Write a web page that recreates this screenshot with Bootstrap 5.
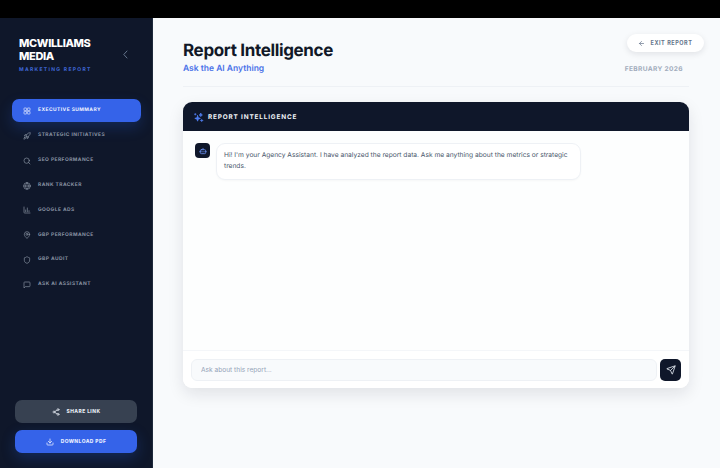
<!DOCTYPE html>
<html lang="en">
  <head>
    <meta charset="UTF-8" />
    <meta name="viewport" content="width=device-width, initial-scale=1.0" />
    <title>Report Intelligence</title>

    <!-- Bootstrap CSS -->
    <link
      rel="stylesheet"
      href="https://cdn.jsdelivr.net/npm/bootstrap@5.3.0/dist/css/bootstrap.min.css"
    />

    <style>
      html, body { height: 468px; overflow: hidden; }
      body { font-family: Inter, "Liberation Sans", sans-serif; background: #000; padding-top: 18px; text-rendering: geometricPrecision; }
      .app-shell { height: 450px; background: #f8fafc; }

      /* sidebar */
      .side-panel { width: 153px; background: #0f172a; border-right: 1px solid #1e293b; flex-shrink: 0; }
      .brand-box { padding: 19px 19px 0 19px; height: 81px; }
      .brand-name { font-size: 11px; line-height: 13px; font-weight: 800; color: #fff; letter-spacing: -0.35px; width: 76px; margin: 0; }
      .brand-sub { font-size: 5px; line-height: 6px; font-weight: 700; color: #3f68d8; letter-spacing: 1.3px; margin-top: 4px; }
      .collapse-arrow { color: #64748b; margin-top: 13px; margin-right: 4px; }
      .side-menu { padding: 0 11px 0 12px; gap: 1.86px; }
      .side-item { height: 23px; padding: 1px 0 0 11px; gap: 7px; font-size: 4.9px; font-weight: 700; letter-spacing: 0.45px; color: #8b95a5; border-radius: 7px; text-decoration: none; text-transform: uppercase; }
      .side-item svg { color: #8b95a5; flex-shrink: 0; }
      .side-item.is-active { background: #3563e9; color: #f1f5ff; box-shadow: 0 6px 14px rgba(37, 99, 235, .22); }
      .side-item.is-active svg { color: #dbe4ff; }
      .side-actions { padding: 0 15px 15px 15px; gap: 7px; }
      .side-btn { height: 23px; border-radius: 7px; font-size: 4.9px; font-weight: 800; letter-spacing: 0.45px; gap: 7px; border: 0; color: #e2e8f0; padding: 0; }
      .btn-share { background: #374151; }
      .btn-pdf { background: #3563e9; box-shadow: 0 5px 14px rgba(37, 99, 235, .25); color: #e6ecff; }

      /* main */
      .main-area { padding: 16px 16px 0 30px; min-width: 0; }
      .page-head { width: 506px; height: 53px; border-bottom: 1px solid #eef1f5; position: relative; }
      .page-title { font-size: 17px; line-height: 22px; font-weight: 700; letter-spacing: -0.35px; color: #111827; margin: 6px 0 0 0; }
      .page-sub { font-size: 8.5px; line-height: 12px; font-weight: 600; color: #4a72e8; margin-top: 1px; }
      .exit-pill { position: absolute; top: 0; left: 444px; width: 77px; height: 18px; background: #fff; border: 0; border-radius: 9px; box-shadow: 0 2px 6px rgba(15, 23, 42, .1); font-size: 5.5px; font-weight: 700; letter-spacing: 0.55px; color: #64748b; gap: 5px; padding: 0; }
      .report-date { font-size: 6.6px; line-height: 10px; font-weight: 700; letter-spacing: 0.35px; color: #a3adbd; margin-top: 30px; padding-right: 6px; }

      /* chat */
      .chat-box { width: 506px; height: 286px; margin-top: 15px; background: #fff; border: 0; border-radius: 9px; box-shadow: 0 6px 16px rgba(15, 23, 42, .1); overflow: hidden; }
      .chat-head { height: 29px; background: #0f172a; padding: 2px 0 0 10px; gap: 4px; font-size: 6.4px; font-weight: 700; letter-spacing: 0.85px; color: #f1f5f9; }
      .chat-body { height: 219px; padding: 12px; background: #fdfefe; gap: 6px; }
      .bot-avatar { width: 15px; height: 15px; background: #0f172a; border-radius: 4px; flex-shrink: 0; }
      .bot-bubble { width: 365px; height: 37px; background: #fff; border: 1px solid #eef1f5; border-radius: 9px; padding: 6px 4px 6px 7px; font-size: 6.65px; line-height: 11px; color: #475569; box-shadow: 0 1px 2px rgba(15, 23, 42, .03); }
      .chat-foot { height: 38px; padding: 8px; gap: 3px; background: #fff; border-top: 1px solid #f4f6f9; }
      .ask-input.form-control { height: 22px; width: 466px; min-height: 0; background: #f8fafc; border: 1px solid #eef1f5; border-radius: 6px; font-size: 6.6px; padding: 0 9px; color: #475569; box-shadow: none; }
      .ask-input.form-control::placeholder { color: #94a3b8; }
      .send-btn { width: 21px; height: 22px; background: #0f172a; border: 0; border-radius: 5px; padding: 0; flex-shrink: 0; }
    </style>
  </head>
  <body>
    <div class="app-shell d-flex">
      <!-- sidebar -->
      <div class="side-panel d-flex flex-column">
        <div class="brand-box d-flex justify-content-between align-items-start">
          <div>
            <h1 class="brand-name">MCWILLIAMS MEDIA</h1>
            <div class="brand-sub">MARKETING REPORT</div>
          </div>
          <svg class="collapse-arrow" width="7" height="9" viewBox="0 0 7 9" fill="none" stroke="currentColor" stroke-width="1" stroke-linecap="round" stroke-linejoin="round"><path d="M5 1 1.8 4.5 5 8" /></svg>
        </div>

        <div class="side-menu d-flex flex-column">
          <a class="side-item is-active d-flex align-items-center" href="#">
            <svg width="8" height="8" viewBox="0 0 24 24" fill="none" stroke="currentColor" stroke-width="2.2"><rect x="3" y="3" width="8" height="8" rx="1.5" /><rect x="13" y="3" width="8" height="8" rx="1.5" /><rect x="3" y="13" width="8" height="8" rx="1.5" /><rect x="13" y="13" width="8" height="8" rx="1.5" /></svg>
            Executive Summary
          </a>
          <a class="side-item d-flex align-items-center" href="#">
            <svg width="8" height="8" viewBox="0 0 24 24" fill="none" stroke="currentColor" stroke-width="2" stroke-linecap="round" stroke-linejoin="round"><path d="M4.5 16.5c-1.5 1.3-2 5-2 5s3.700-.5 5-2c.7-.8.7-2.100-.1-2.900a2.200 2.200 0 0 0-2.900-.1z" /><path d="m12 15-3-3a22 22 0 0 1 2-3.900A12.900 12.900 0 0 1 22 2c0 2.700-.8 7.500-6 11a22.400 22.400 0 0 1-4 2z" /><path d="M9 12H4s.6-3 2-4c1.600-1.100 5 0 5 0M12 15v5s3-.6 4-2c1.100-1.600 0-5 0-5" /></svg>
            Strategic Initiatives
          </a>
          <a class="side-item d-flex align-items-center" href="#">
            <svg width="8" height="8" viewBox="0 0 24 24" fill="none" stroke="currentColor" stroke-width="2" stroke-linecap="round"><circle cx="11" cy="11" r="8" /><path d="m21 21-4.300-4.300" /></svg>
            SEO Performance
          </a>
          <a class="side-item d-flex align-items-center" href="#">
            <svg width="8" height="8" viewBox="0 0 24 24" fill="none" stroke="currentColor" stroke-width="2" stroke-linecap="round"><circle cx="12" cy="12" r="10" /><path d="M2 12h20M12 2a15 15 0 0 1 0 20 15 15 0 0 1 0-20z" /></svg>
            Rank Tracker
          </a>
          <a class="side-item d-flex align-items-center" href="#">
            <svg width="8" height="8" viewBox="0 0 24 24" fill="none" stroke="currentColor" stroke-width="2" stroke-linecap="round" stroke-linejoin="round"><path d="M3 3v16a2 2 0 0 0 2 2h16M8 17v-5M13 17V6M18 17v-3" /></svg>
            Google Ads
          </a>
          <a class="side-item d-flex align-items-center" href="#">
            <svg width="8" height="8" viewBox="0 0 24 24" fill="none" stroke="currentColor" stroke-width="2" stroke-linecap="round" stroke-linejoin="round"><path d="M20 10c0 5-5.500 10.200-7.400 11.800a1 1 0 0 1-1.200 0C9.500 20.200 4 15 4 10a8 8 0 0 1 16 0z" /><circle cx="12" cy="10" r="3" /></svg>
            GBP Performance
          </a>
          <a class="side-item d-flex align-items-center" href="#">
            <svg width="8" height="8" viewBox="0 0 24 24" fill="none" stroke="currentColor" stroke-width="2" stroke-linecap="round" stroke-linejoin="round"><path d="M20 13c0 5-3.500 7.500-7.700 8.900a1 1 0 0 1-.6 0C7.500 20.500 4 18 4 13V6a1 1 0 0 1 1-1c2 0 4.500-1.200 6.200-2.700a1.200 1.200 0 0 1 1.600 0C14.500 3.800 17 5 19 5a1 1 0 0 1 1 1z" /></svg>
            GBP Audit
          </a>
          <a class="side-item d-flex align-items-center" href="#">
            <svg width="8" height="8" viewBox="0 0 24 24" fill="none" stroke="currentColor" stroke-width="2" stroke-linecap="round" stroke-linejoin="round"><path d="M21 15a2 2 0 0 1-2 2H7l-4 4V5a2 2 0 0 1 2-2h14a2 2 0 0 1 2 2z" /></svg>
            Ask AI Assistant
          </a>
        </div>

        <div class="side-actions d-flex flex-column mt-auto">
          <button class="side-btn btn-share d-flex align-items-center justify-content-center" type="button">
            <svg width="8" height="8" viewBox="0 0 24 24" fill="none" stroke="currentColor" stroke-width="2.200" stroke-linecap="round"><circle cx="18" cy="5" r="3" /><circle cx="6" cy="12" r="3" /><circle cx="18" cy="19" r="3" /><path d="m8.600 13.500 6.800 4M15.400 6.500l-6.800 4" /></svg>
            SHARE LINK
          </button>
          <button class="side-btn btn-pdf d-flex align-items-center justify-content-center" type="button">
            <svg width="8" height="8" viewBox="0 0 24 24" fill="none" stroke="currentColor" stroke-width="2.400" stroke-linecap="round" stroke-linejoin="round"><path d="M21 15v4a2 2 0 0 1-2 2H5a2 2 0 0 1-2-2v-4M7 10l5 5 5-5M12 15V3" /></svg>
            DOWNLOAD PDF
          </button>
        </div>
      </div>

      <!-- main -->
      <div class="main-area flex-grow-1">
        <div class="page-head d-flex justify-content-between">
          <div>
            <h2 class="page-title">Report Intelligence</h2>
            <div class="page-sub">Ask the AI Anything</div>
          </div>
          <div class="report-date">FEBRUARY 2026</div>
          <button class="exit-pill d-flex align-items-center justify-content-center" type="button">
            <svg width="7" height="7" viewBox="0 0 24 24" fill="none" stroke="currentColor" stroke-width="2.400" stroke-linecap="round" stroke-linejoin="round"><path d="m12 19-7-7 7-7M19 12H5" /></svg>
            EXIT REPORT
          </button>
        </div>

        <div class="chat-box card">
          <div class="chat-head d-flex align-items-center">
            <svg width="11" height="11" viewBox="0 0 24 24" fill="#4f7df0" stroke="#4f7df0" stroke-width="1.800" stroke-linecap="round" stroke-linejoin="round"><path d="M10 8l1.500 4.500L16 14l-4.500 1.500L10 20l-1.500-4.500L4 14l4.500-1.500z" /><path d="M17 3l1 2.500L20.500 6.500 18 7.500 17 10l-1-2.500L13.500 6.500 16 5.500zM5 3.500v3M3.500 5h3M19 16v5M16.500 18.500h5" /></svg>
            REPORT INTELLIGENCE
          </div>
          <div class="chat-body d-flex align-items-start">
            <div class="bot-avatar d-flex align-items-center justify-content-center">
              <svg width="8" height="8" viewBox="0 0 24 24" fill="none" stroke="#6d94f5" stroke-width="2.400" stroke-linecap="round" stroke-linejoin="round"><path d="M12 8V4" /><rect x="4" y="8" width="16" height="12" rx="3" /><path d="M2 14h2M20 14h2M9 13v2M15 13v2" /></svg>
            </div>
            <div class="bot-bubble">Hi! I'm your Agency Assistant. I have analyzed the report data. Ask me anything about the metrics or strategic trends.</div>
          </div>
          <div class="chat-foot d-flex align-items-center">
            <input class="ask-input form-control" type="text" placeholder="Ask about this report..." />
            <button class="send-btn d-flex align-items-center justify-content-center" type="button">
              <svg width="10" height="10" viewBox="0 0 24 24" fill="none" stroke="#e2e8f0" stroke-width="2" stroke-linecap="round" stroke-linejoin="round"><path d="M14.500 21.700a.5.5 0 0 0 .9 0l6.500-19a.5.5 0 0 0-.6-.6l-19 6.500a.5.5 0 0 0 0 .9l7.900 3.200a2 2 0 0 1 1.100 1.100zM21.800 2.200 10.900 13.100" /></svg>
            </button>
          </div>
        </div>
      </div>
    </div>

    <!-- Bootstrap JS -->
    <script src="https://cdn.jsdelivr.net/npm/bootstrap@5.3.0/dist/js/bootstrap.bundle.min.js"></script>
  </body>
</html>
